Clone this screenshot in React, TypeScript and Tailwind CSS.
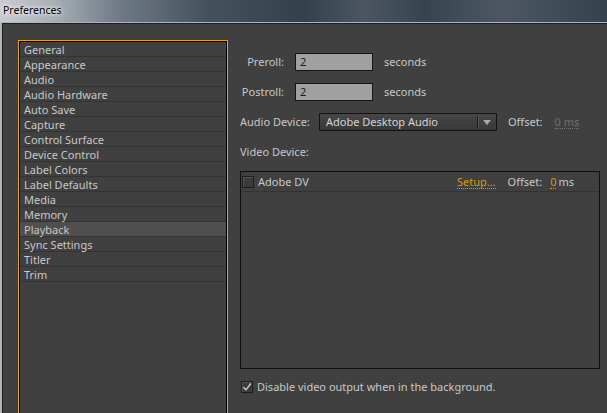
import React from "react";

const CATEGORIES = [
  "General",
  "Appearance",
  "Audio",
  "Audio Hardware",
  "Auto Save",
  "Capture",
  "Control Surface",
  "Device Control",
  "Label Colors",
  "Label Defaults",
  "Media",
  "Memory",
  "Playback",
  "Sync Settings",
  "Titler",
  "Trim",
];

const SELECTED = "Playback";

function Checkbox({ checked }: { checked?: boolean }) {
  return (
    <span className="relative flex h-[12px] w-[12px] shrink-0 items-center justify-center border border-[#1c1c1c] bg-[#3b3b3b] shadow-[inset_1px_1px_0_#555]">
      {checked && (
        <svg width="10" height="10" viewBox="0 0 10 10" className="absolute">
          <path d="M1.5 5.2 L4 7.8 L8.8 1.5" fill="none" stroke="#cfcfcf" strokeWidth="1.4" />
        </svg>
      )}
    </span>
  );
}

function NumberField({ value }: { value: string }) {
  return (
    <div className="ml-[11px] flex h-[18px] w-[78px] items-center border border-[#151515] bg-[#a0a0a0] pl-[4px] text-[#1a1a1a]">
      {value}
    </div>
  );
}

export default function App() {
  return (
    <div
      className="flex h-[413px] w-[607px] flex-col overflow-hidden bg-[#404040] text-[11px] text-[#c6c8ca]"
      style={{ fontFamily: '"Noto Sans", "DejaVu Sans", sans-serif' }}
    >
      {/* Aero title bar */}
      <div className="flex h-[22px] shrink-0 items-center bg-[linear-gradient(90deg,#c9cdd1_0%,#a7aeb5_9%,#6e7984_20%,#45525e_34%,#34414d_50%,#4b5661_60%,#37444f_70%,#4c5762_83%,#35424e_100%)] pl-[3px]">
        <span className="text-[10.5px] text-black [text-shadow:0_0_6px_#ffffff,0_0_3px_#ffffff]">
          Preferences
        </span>
      </div>

      {/* Window frame */}
      <div className="flex min-h-0 flex-1 border-t border-l-2 border-[#aeb5bc]">
        <div className="flex min-h-0 flex-1 border-t border-l border-[#1f1f1f] bg-[#404040] pt-[16px] pl-[15px]">
          {/* Category list */}
          <div className="h-[420px] w-[210px] shrink-0 border border-[#e3a414]">
            <div className="h-full border border-black bg-[#404040]">
              {CATEGORIES.map((name) => (
                <div
                  key={name}
                  className={`h-[15px] border-b border-[#333333] pt-[1px] pl-[4px] leading-[13px] ${
                    name === SELECTED ? "bg-[#4f4f4f]" : ""
                  }`}
                >
                  {name}
                </div>
              ))}
            </div>
          </div>

          {/* Playback settings */}
          <div className="ml-[12px] flex flex-1 flex-col pt-[13px] pr-[7px]">
            <div className="flex h-[18px] items-center">
              <span className="w-[44px] text-right">Preroll:</span>
              <NumberField value="2" />
              <span className="ml-[11px]">seconds</span>
            </div>
            <div className="mt-[12px] flex h-[18px] items-center">
              <span className="w-[44px] text-right">Postroll:</span>
              <NumberField value="2" />
              <span className="ml-[11px]">seconds</span>
            </div>
            <div className="mt-[12px] flex h-[18px] items-center">
              <span className="w-[79px]">Audio Device:</span>
              <div className="flex h-[18px] w-[178px] items-center border border-[#131313] bg-[linear-gradient(#464646,#393939)]">
                <span className="flex-1 pl-[6px] text-[#d2d4d6]">Adobe Desktop Audio</span>
                <span className="h-[12px] w-px bg-[#1c1c1c] shadow-[1px_0_0_#555]" />
                <span className="flex w-[18px] justify-center">
                  <svg width="8" height="5" viewBox="0 0 8 5">
                    <path d="M0 0 H8 L4 5 Z" fill="#a9a9a9" />
                  </svg>
                </span>
              </div>
              <span className="ml-[11px]">Offset:</span>
              <span className="ml-[12px] border-b border-dotted border-[#777] leading-[12px] text-[#707070]">
                0 ms
              </span>
            </div>
            <div className="mt-[12px] flex h-[18px] items-center">Video Device:</div>

            {/* Video device table */}
            <div className="mt-[10px] h-[198px] border border-[#111111]">
              <div className="flex h-[20px] items-center border-b border-[#333333] pt-[1px] pl-[1px]">
                <Checkbox />
                <span className="ml-[4px] flex-1">Adobe DV</span>
                <span className="border-b border-dotted border-[#d19a16] leading-[12px] text-[#d39c1a]">
                  Setup...
                </span>
                <span className="ml-[12px]">Offset:</span>
                <span className="ml-[8px] border-b border-dotted border-[#d19a16] leading-[12px] text-[#d39c1a]">
                  0
                </span>
                <span className="ml-[2px] mr-[25px]">ms</span>
              </div>
            </div>

            <div className="mt-[9px] flex h-[18px] items-center pl-[1px]">
              <Checkbox checked />
              <span className="ml-[4px]">Disable video output when in the background.</span>
            </div>
          </div>
        </div>
      </div>
    </div>
  );
}
